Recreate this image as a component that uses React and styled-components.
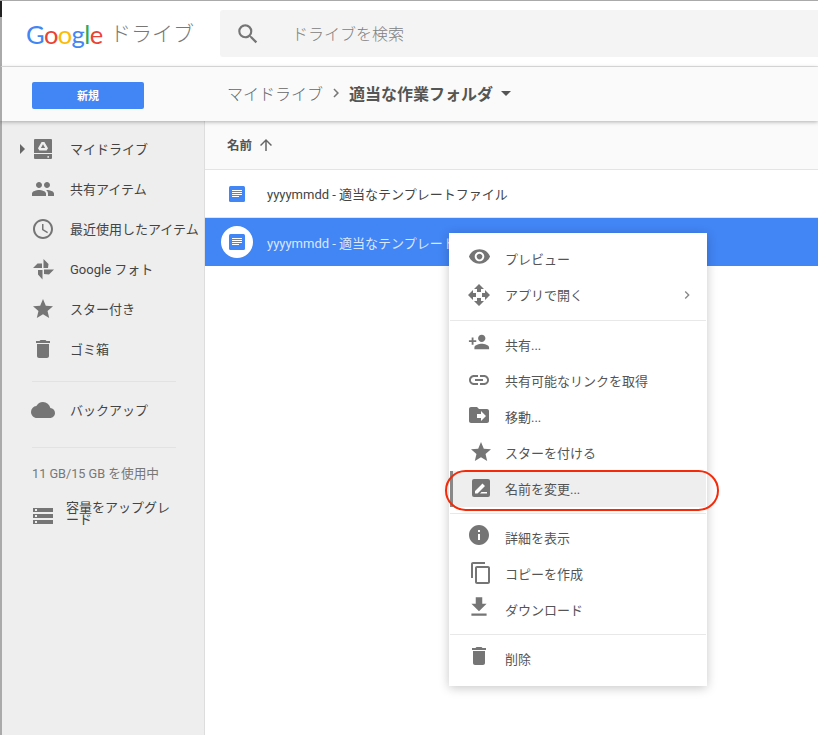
import React from 'react';
import styled, { createGlobalStyle } from 'styled-components';
import {
  MdSearch, MdPeople, MdAccessTime, MdStar, MdDelete, MdCloud, MdStorage, MdVisibility, MdOpenWith,
  MdPersonAdd, MdLink, MdDriveFileMove, MdInfo, MdContentCopy, MdFileDownload, MdArrowUpward,
  MdArrowDropDown, MdChevronRight, MdArrowRight,
} from 'react-icons/md';

const Global = createGlobalStyle`
  html, body { margin: 0; padding: 0; background: #fff; }
  body { font-family: Roboto, "Noto Sans CJK JP", sans-serif; font-size: 13px; }
  * { box-sizing: border-box; }
`;

const Page = styled.div`
  position: relative; width: 818px; height: 735px; overflow: hidden; background: #fff;
  border-top: 1px solid #aaa; display: flex; flex-direction: column;
`;
const Notch = styled.div`position: absolute; left: 0; top: 0; width: 2px; height: 16px; background: #222; z-index: 5;`;
const Header = styled.header`
  height: 66px; flex: none; display: flex; align-items: center; background: #fff;
  border-bottom: 1px solid #e4e4e4; border-left: 2px solid #aaa; padding-left: 24px;
`;
const Logo = styled.div`display: flex; align-items: center; width: 194px; flex: none;`;
const GoogleWord = styled.span`font-family: Lato, sans-serif; font-size: 25.500px; letter-spacing: -0.6px; font-weight: 400; line-height: 30px; width: 75px; flex: none; white-space: nowrap;`;
const Letter = styled.span`color: ${p => p.$c};`;
const Product = styled.span`font-size: 21px; color: #777; font-weight: 300; margin-left: 9px; line-height: 30px;`;
const Search = styled.div`
  flex: 1; height: 47px; background: #f4f4f4; border-radius: 3px 0 0 3px; display: flex; align-items: center; padding-left: 15px;
  color: #808080; font-size: 16px; font-weight: 300; gap: 31px;
  svg { color: #757575; flex: none; }
`;
const SearchHint = styled.span`margin-bottom: 2px;`;
const Toolbar = styled.div`
  position: relative; z-index: 2; height: 54px; flex: none; background: #fafafa; display: flex; align-items: center;
  border-left: 2px solid #aaa; box-shadow: 0 1px 4px rgba(0,0,0,.3);
`;
const ToolbarLeft = styled.div`width: 203px; flex: none; padding-left: 30px;`;
const NewButton = styled.div`
  width: 112px; height: 27px; margin-top: 3px; padding-bottom: 2px; background: #4285f4; border-radius: 2px; color: #fff; font-size: 11px; font-weight: 700;
  display: flex; align-items: center; justify-content: center;
`;
const Crumbs = styled.div`display: flex; align-items: center; padding: 0 0 2px 22px; font-size: 16px; color: #666; font-weight: 300;`;
const CrumbSep = styled(MdChevronRight)`margin: 0 4px 0 4px; color: #777;`;
const CrumbCurrent = styled.span`font-weight: 700; color: #555;`;
const CrumbCaret = styled(MdArrowDropDown)`margin-left: 1px; color: #555;`;

const Main = styled.div`flex: 1; display: flex; min-height: 0;`;
const Sidebar = styled.aside`
  width: 205px; flex: none; background: #eee; border-left: 2px solid #aaa; border-right: 1px solid #ddd; padding-top: 8px;
`;
const NavRow = styled.div`
  position: relative; height: 40px; padding-bottom: 2px; display: flex; align-items: center; color: #444; white-space: nowrap;
`;
const NavIcon = styled.span`
  width: 68px; margin-top: 2px; padding-left: ${p => 29 + (p.$shift || 0)}px; flex: none; display: flex; color: #757575;
`;
const Expander = styled(MdArrowRight)`position: absolute; left: 8px; top: 8px; color: #666;`;
const SideRule = styled.div`height: 1px; margin: ${p => p.$m}; background: #e2e2e2; width: 144px; margin-left: 30px;`;
const Storage = styled.div`padding-left: 30px; color: #777; font-size: 12.7px; line-height: 16px; margin-top: 18px;`;
const Upgrade = styled.div`display: flex; align-items: center; margin-top: 18px; color: #444; font-size: 13px; line-height: 12.500px;`;
const UpgradeIcon = styled.span`width: 64px; padding-left: 29px; flex: none; display: flex; color: #757575; margin-top: 4px;`;
const UpgradeText = styled.span`width: 108px;`;

const Content = styled.section`flex: 1; min-width: 0; display: flex; flex-direction: column;`;
const ListHead = styled.div`
  height: 49px; flex: none; background: #fafafa; border-bottom: 1px solid #e4e4e4; display: flex; align-items: center;
  padding: 0 0 2px 22px; gap: 5px; color: #555; font-size: 12.5px; font-weight: 700;
  svg { color: #666; margin-top: 2px; }
`;
const FileRow = styled.div`
  height: 48px; flex: none; display: flex; align-items: center; padding-left: 16px; gap: 14px;
  background: ${p => p.$selected ? '#4285f4' : '#fff'}; color: ${p => p.$selected ? '#dbe7fc' : '#444'};
  border-bottom: ${p => p.$selected ? 'none' : '1px solid #e4e4e4'}; font-size: 13px; white-space: nowrap;
`;
const IconDisc = styled.span`
  width: 32px; height: 32px; border-radius: 50%; flex: none; display: flex; align-items: center; justify-content: center;
  background: ${p => p.$selected ? '#fff' : 'transparent'};
`;

const Menu = styled.div`
  position: absolute; z-index: 10; left: 449px; top: 232px; width: 258px; height: 453px; background: #fff; padding-top: 8px;
  box-shadow: 0 2px 10px rgba(0,0,0,.22);
`;
const MenuItem = styled.div`
  position: relative; height: 36px; display: flex; align-items: center; color: #555; font-size: 13px;
  margin: 0 1px; padding-bottom: 2px;
  background: ${p => p.$active ? '#eee' : 'transparent'};
  border-left: ${p => p.$active ? '3px solid #888' : 'none'};
  padding-left: ${p => p.$active ? '52px' : '55px'};
`;
const MenuIcon = styled.span`
  position: absolute; left: ${p => (p.$active ? 14 : 17) + (p.$dx || 0)}px; top: ${p => 3 + (p.$dy || 0)}px;
  width: 24px; height: 24px; display: flex; align-items: center; justify-content: center; color: #757575;
  svg { flex: none; }
`;
const MenuMore = styled(MdChevronRight)`position: absolute; right: 11px; top: 10px; color: #888;`;
const MenuRule = styled.div`height: 1px; background: #e8e8e8; margin: ${p => p.$first ? '7px' : '6px'} 1px 6px;`;
const Ring = styled.div`
  position: absolute; z-index: 11; left: 445px; top: 469px; width: 274px; height: 41px;
  border: 2px solid #f52a08; border-radius: 21px; pointer-events: none;
`;

const DocIcon = () => (
  <svg width="16" height="16" viewBox="0 0 16 16">
    <rect width="16" height="16" rx="1.5" fill="#4285f4" />
    <path d="M3 4h10v1H3zM3 6h10v1H3zM3 8h10v1H3zM3 10h7v1H3z" fill="#fff" />
  </svg>
);
const DriveBox = () => (
  <svg width="20" height="20" viewBox="0 0 20 20" fill="#757575">
    <path fillRule="evenodd" d="M2 0h16a1 1 0 0 1 1 1v13H1V1a1 1 0 0 1 1-1zM8.600 3h2.800l3.600 6.200-1.400 2.300H6.400L5 9.200zM10 5.200 7.900 8.900h4.200z" />
    <path fillRule="evenodd" d="M1 15h18v4a1 1 0 0 1-1 1H2a1 1 0 0 1-1-1zm14.200 2a.9.9 0 1 0 0 1.800.9.900 0 0 0 0-1.800z" />
  </svg>
);
const Pinwheel = () => (
  <svg width="22" height="22" viewBox="0 0 22 22" fill="#757575">
    <path d="M11.500 1l5 5-.5 4h-4.500zM12 11.500h10l-5 5-5-.5zM10.500 12v9.500L6 16.500V12zM1 10l4.500-4.500H10V10z" />
  </svg>
);
const RenameBox = () => (
  <svg width="18" height="18" viewBox="0 0 18 18">
    <rect width="18" height="18" rx="2" fill="#757575" />
    <path d="M3 14.500V12l7.500-7.500L13 7l-7.500 7.500zM8 14.500l1.500-1.500H15v1.500z" fill="#fff" />
  </svg>
);

const nav = [
  { t: 'マイドライブ', i: <DriveBox />, x: true, s: 2 },
  { t: '共有アイテム', i: <MdPeople size={24} /> },
  { t: '最近使用したアイテム', i: <MdAccessTime size={24} /> },
  { t: 'Google フォト', i: <Pinwheel />, s: 1 },
  { t: 'スター付き', i: <MdStar size={24} /> },
  { t: 'ゴミ箱', i: <MdDelete size={24} /> },
];

const groups = [
  [
    { t: 'プレビュー', i: <MdVisibility size={23} /> },
    { t: 'アプリで開く', i: <MdOpenWith size={24} />, dy: 3, more: true },
  ],
  [
    { t: '共有...', i: <MdPersonAdd size={22} /> },
    { t: '共有可能なリンクを取得', i: <MdLink size={24} />, dy: 2 },
    { t: '移動...', i: <MdDriveFileMove size={24} />, dy: 1 },
    { t: 'スターを付ける', i: <MdStar size={24} />, dx: 2, dy: 2 },
    { t: '名前を変更...', i: <RenameBox />, active: true, dx: 2, dy: 2 },
  ],
  [
    { t: '詳細を表示', i: <MdInfo size={24} /> },
    { t: 'コピーを作成', i: <MdContentCopy size={24} />, dx: 2, dy: 2 },
    { t: 'ダウンロード', i: <MdFileDownload size={26} /> },
  ],
  [{ t: '削除', i: <MdDelete size={24} /> }],
];

export default function App() {
  return (
    <Page>
      <Global />
      <Notch />
      <Header>
        <Logo>
          <GoogleWord>
            <Letter $c="#4285f4">G</Letter><Letter $c="#ea4335">o</Letter><Letter $c="#fbbc05">o</Letter>
            <Letter $c="#4285f4">g</Letter><Letter $c="#34a853">l</Letter><Letter $c="#ea4335">e</Letter>
          </GoogleWord>
          <Product>ドライブ</Product>
        </Logo>
        <Search><MdSearch size={26} /><SearchHint>ドライブを検索</SearchHint></Search>
      </Header>
      <Toolbar>
        <ToolbarLeft><NewButton>新規</NewButton></ToolbarLeft>
        <Crumbs>
          マイドライブ<CrumbSep size={18} /><CrumbCurrent>適当な作業フォルダ</CrumbCurrent><CrumbCaret size={24} />
        </Crumbs>
      </Toolbar>
      <Main>
        <Sidebar>
          {nav.map(n => (
            <NavRow key={n.t}>
              {n.x && <Expander size={24} />}
              <NavIcon $shift={n.s}>{n.i}</NavIcon>{n.t}
            </NavRow>
          ))}
          <SideRule $m="12px 0 8px" />
          <NavRow><NavIcon><MdCloud size={24} /></NavIcon>バックアップ</NavRow>
          <SideRule $m="17px 0 0" />
          <Storage>11 GB/15 GB を使用中</Storage>
          <Upgrade>
            <UpgradeIcon><MdStorage size={24} /></UpgradeIcon>
            <UpgradeText>容量をアップグレード</UpgradeText>
          </Upgrade>
        </Sidebar>
        <Content>
          <ListHead>名前<MdArrowUpward size={18} /></ListHead>
          <FileRow>
            <IconDisc><DocIcon /></IconDisc>yyyymmdd - 適当なテンプレートファイル
          </FileRow>
          <FileRow $selected>
            <IconDisc $selected><DocIcon /></IconDisc>yyyymmdd - 適当なテンプレートファイル
          </FileRow>
        </Content>
      </Main>
      <Menu>
        {groups.map((g, gi) => (
          <React.Fragment key={gi}>
            {gi > 0 && <MenuRule $first={gi === 1} />}
            {g.map(m => (
              <MenuItem key={m.t} $active={m.active}>
                <MenuIcon $active={m.active} $dx={m.dx} $dy={m.dy}>{m.i}</MenuIcon>
                {m.t}
                {m.more && <MenuMore size={16} />}
              </MenuItem>
            ))}
          </React.Fragment>
        ))}
      </Menu>
      <Ring />
    </Page>
  );
}
